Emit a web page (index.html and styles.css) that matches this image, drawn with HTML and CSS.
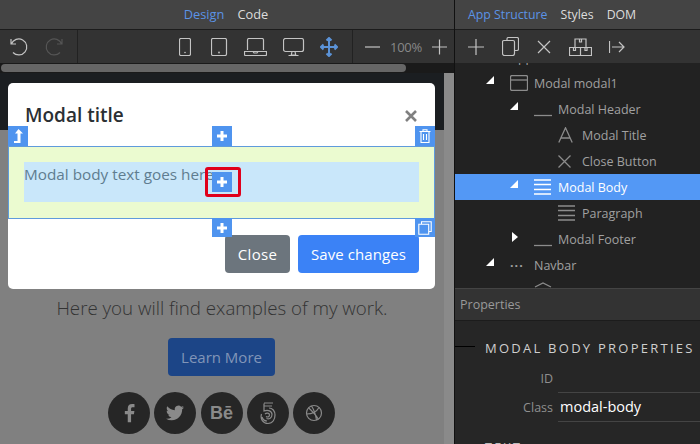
FILE: index.html
```html
<!DOCTYPE html>
<html lang="en">
<head>
    <meta charset="UTF-8" />
    <title>App Designer</title>
    <link rel="stylesheet" href="styles.css">
</head>
<body>
<div class="app">
    <div class="stage">
        <div class="tabs tabs-center">
            <span class="tab active">Design</span>
            <span class="tab">Code</span>
        </div>
        <div class="toolbar">
            <div class="tool-group history">
                <svg class="ic" width="20" height="20" viewBox="0 0 20 20"><path d="M2 2v5h5M2.300 7A8 8 0 1 1 4 15.500"/></svg>
                <svg class="ic dim" width="20" height="20" viewBox="0 0 20 20"><path d="M18 2v5h-5M17.700 7A8 8 0 1 0 16 15.500"/></svg>
            </div>
            <div class="tool-group devices">
                <svg class="ic dev-phone" width="12" height="18" viewBox="0 0 12 18"><rect x=".5" y=".5" width="11" height="17" rx="1.500"/><circle class="dot" cx="6" cy="14.500" r=".8"/></svg>
                <svg class="ic dev-tablet" width="17" height="18" viewBox="0 0 17 18"><rect x=".5" y=".5" width="15" height="17" rx="1.500"/><circle class="dot" cx="8" cy="14.500" r=".9"/></svg>
                <svg class="ic dev-laptop" width="23" height="18" viewBox="0 0 23 18"><path d="M3.500 12V2a1.500 1.500 0 0 1 1.500-1.500h13A1.500 1.500 0 0 1 19.500 2v10M.5 13.500h22v3a1 1 0 0 1-1 1h-20a1 1 0 0 1-1-1zM9 13.500l1 1.500h3l1-1.500"/></svg>
                <svg class="ic dev-desktop" width="22" height="18" viewBox="0 0 22 18"><rect x=".5" y=".5" width="20" height="13" rx="2"/><path d="M9 13.500l-.7 3.500h4.400l-.7-3.500M5.500 17.500h10"/></svg>
                <svg class="ic blue dev-free" width="18" height="20" viewBox="0 0 18 20"><path d="M9 1v18M1 10h16M6.500 3.500L9 1l2.500 2.500M6.500 16.500L9 19l2.500-2.500M3.500 7.500L1 10l2.500 2.500M14.500 7.500L17 10l-2.500 2.500"/></svg>
            </div>
            <div class="tool-group zoom">
                <svg class="ic" width="15" height="16" viewBox="0 0 15 16"><path d="M0 8h15"/></svg>
                <span class="zoom-val">100%</span>
                <svg class="ic" width="15" height="16" viewBox="0 0 15 16"><path d="M0 8h15M7.500 .5v15"/></svg>
            </div>
        </div>
        <div class="hscroll"><div class="hscroll-thumb"></div></div>

        <div class="canvas">
            <div class="page">
                <div class="page-nav"></div>
                <p class="lead">Here you will find examples of my work.</p>
                <a class="btn btn-learn">Learn More</a>
                <div class="social">
                    <span class="circle"><svg width="20" height="20" viewBox="0 0 24 24"><path class="fill" d="M14.500 23v-9.500h3.400l.6-4h-4V7.200c0-1.200.4-2 2-2h2.100V1.500C18.200 1.400 17 1.300 15.700 1.300c-3.100 0-5.200 1.800-5.200 5.300v2.900H7v4h3.500V23z"/></svg></span>
                    <span class="circle"><svg width="18" height="18" viewBox="0 0 24 24"><path class="fill" d="M23.953 4.570a10 10 0 01-2.825.775 4.958 4.958 0 002.163-2.723c-.951.555-2.005.959-3.127 1.184a4.920 4.920 0 00-8.384 4.482C7.690 8.095 4.067 6.130 1.640 3.162a4.822 4.822 0 00-.666 2.475c0 1.710.870 3.213 2.188 4.096a4.904 4.904 0 01-2.228-.616v.060a4.923 4.923 0 003.946 4.827 4.996 4.996 0 01-2.212.085 4.936 4.936 0 004.604 3.417 9.867 9.867 0 01-6.102 2.105c-.390 0-.779-.023-1.170-.067a13.995 13.995 0 007.557 2.209c9.053 0 13.998-7.496 13.998-13.985 0-.210 0-.420-.015-.630A9.935 9.935 0 0024 4.590z"/></svg></span>
                    <span class="circle behance">Bē</span>
                    <span class="circle"><svg width="16" height="23" viewBox="0 0 16 23"><path class="line" d="M4 1h9M4 1.500v2.500h8M4 4v5c4-1.500 8 0 8 3.500s-3 5-5.500 4M1.500 12c-1.500 5 1.500 9.500 6.500 9.500s7-4.500 7-8.500-2.500-7-6-7M2 15c1 3 3 4 5 4M5 12c1.500-1.500 4.500-1 4.500 1s-2 2.500-3.500 1.500"/></svg></span>
                    <span class="circle"><svg width="18" height="18" viewBox="0 0 18 18"><circle class="line" cx="9" cy="9" r="7.500"/><path class="line" d="M3.500 3.800C7 7 11 11 13.500 15.500M1.600 10C6 10 11.500 8 14 3.500M6.500 2C8.500 5 10.500 9.500 11.500 16"/></svg></span>
                </div>
            </div>
            <div class="vscroll"></div>

            <div class="modal">
                <div class="modal-header">
                    <h5 class="modal-title">Modal title</h5>
                    <svg class="modal-close" width="12" height="12" viewBox="0 0 12 12"><path d="M1 1l10 10M11 1L1 11"/></svg>
                </div>
                <div class="modal-body">
                    <p class="modal-text">Modal body text goes here.</p>
                </div>
                <div class="modal-footer">
                    <a class="btn btn-close">Close</a>
                    <a class="btn btn-save">Save changes</a>
                </div>
            </div>

            <span class="handle h-parent"><svg width="10" height="14" viewBox="0 0 10 14"><path class="fill-w" d="M5.500 0L10 4.500H7.500V14H1v-2h3.500V4.500H2z"/></svg></span>
            <span class="handle h-top"><svg class="plus" width="12" height="12" viewBox="0 0 12 12"><path d="M6 1v10M1 6h10"/></svg></span>
            <span class="handle h-trash"><svg width="12" height="14" viewBox="0 0 12 14"><path class="line-w" d="M.5 2.500h11M4 2.500V.8h4v1.700M2 2.500v11h8v-11M4.500 5v6M7.500 5v6"/></svg></span>
            <span class="handle h-inside"><svg class="plus" width="12" height="12" viewBox="0 0 12 12"><path d="M6 1v10M1 6h10"/></svg></span>
            <span class="marker"></span>
            <span class="handle h-bottom"><svg class="plus" width="12" height="12" viewBox="0 0 12 12"><path d="M6 1v10M1 6h10"/></svg></span>
            <span class="handle h-copy"><svg width="14" height="14" viewBox="0 0 14 14"><path class="line-w" d="M3.500 3V.8h9.700v9.700H11M.8 3.300h9.900v9.900H.8z"/></svg></span>
        </div>
    </div>

    <div class="side">
        <div class="tabs">
            <span class="tab active">App Structure</span>
            <span class="tab">Styles</span>
            <span class="tab">DOM</span>
        </div>
        <div class="toolbar side-tools">
            <svg class="ic" width="16" height="16" viewBox="0 0 16 16"><path d="M0 8h16M8 0v16"/></svg>
            <svg class="ic" width="17" height="19" viewBox="0 0 17 19"><path d="M5 3.500V2a1.500 1.500 0 0 1 1.500-1.500H15A1.500 1.500 0 0 1 16.500 2v10a1.500 1.500 0 0 1-1.500 1.500h-2.500M2 3.500h9A1.500 1.500 0 0 1 12.500 5v11.500A2 2 0 0 1 10.500 18.500H2.500A2 2 0 0 1 .5 16.500V5A1.500 1.500 0 0 1 2 3.500z"/></svg>
            <svg class="ic" width="14" height="14" viewBox="0 0 14 14"><path d="M1 1l12 12M13 1L1 13"/></svg>
            <svg class="ic" width="23" height="18" viewBox="0 0 23 18"><path d="M.5 9.500h11v8H.5zM11.500 9.500h11v8h-11zM6 1h11v8.500H6zM4.500 9.500v3h2v-3M16 9.500v3h2v-3M10.500 1v3h2V1"/></svg>
            <svg class="ic tool-arrow" width="16" height="14" viewBox="0 0 16 14"><path d="M.5 1v12M3 7h12M10 2l5 5-5 5"/></svg>
        </div>

        <div class="tree">
            <ul class="tree-list">
                <li class="row lv0">
                    <span class="arrow"></span>
                    <span class="row-ic"><svg class="ic" width="16" height="16" viewBox="0 0 16 16"><circle cx="8" cy="8" r="5"/></svg></span>
                    App
                </li>
                <li class="row lv1">
                    <span class="arrow open"></span>
                    <span class="row-ic"><svg class="ic" width="18" height="16" viewBox="0 0 18 16"><rect x=".5" y=".5" width="17" height="15" rx="1.500"/><path d="M.5 5h17"/></svg></span>
                    Modal modal1
                </li>
                <li class="row lv2">
                    <span class="arrow open"></span>
                    <span class="row-ic"><svg class="ic" width="18" height="16" viewBox="0 0 18 16"><path d="M0 14.500h18"/></svg></span>
                    Modal Header
                </li>
                <li class="row lv3">
                    <span class="arrow"></span>
                    <span class="row-ic"><svg class="ic" width="15" height="16" viewBox="0 0 15 16"><path d="M.8 15.500L7.500 .8l6.700 14.700M3 11h9"/></svg></span>
                    Modal Title
                </li>
                <li class="row lv3">
                    <span class="arrow"></span>
                    <span class="row-ic"><svg class="ic" width="13" height="13" viewBox="0 0 13 13"><path d="M.5 .5l12 12M12.500 .5l-12 12"/></svg></span>
                    Close Button
                </li>
                <li class="row lv2 selected">
                    <span class="arrow open"></span>
                    <span class="row-ic"><svg class="ic" width="17" height="16" viewBox="0 0 17 16"><path d="M0 1h17M0 5.500h17M0 10.500h17M0 15h17"/></svg></span>
                    Modal Body
                </li>
                <li class="row lv3">
                    <span class="arrow"></span>
                    <span class="row-ic"><svg class="ic" width="17" height="16" viewBox="0 0 17 16"><path d="M0 1h17M0 5.500h17M0 10.500h17M0 15h17"/></svg></span>
                    Paragraph
                </li>
                <li class="row lv2">
                    <span class="arrow closed"></span>
                    <span class="row-ic"><svg class="ic" width="18" height="16" viewBox="0 0 18 16"><path d="M0 14.500h18"/></svg></span>
                    Modal Footer
                </li>
                <li class="row lv1">
                    <span class="arrow open"></span>
                    <span class="row-ic dots">···</span>
                    Navbar
                </li>
                <li class="row lv2 row-cut">
                    <span class="arrow"></span>
                    <svg class="ic" width="18" height="8" viewBox="0 0 18 8"><path d="M1 5l8-4 8 4"/></svg>
                </li>
            </ul>
        </div>

        <div class="props">
            <div class="props-head">Properties</div>
            <div class="props-body">
                <h3 class="props-title">Modal Body Properties</h3>
                <div class="field">
                    <label class="field-label">ID</label>
                    <div class="field-value"></div>
                </div>
                <div class="field">
                    <label class="field-label">Class</label>
                    <div class="field-value">modal-body</div>
                </div>
                <h3 class="props-sub">Text</h3>
            </div>
        </div>
    </div>
</div>
</body>
</html>
```
FILE: styles.css
```css
* {
    box-sizing: border-box;
}
html, body {
    margin: 0;
    height: 100%;
    overflow: hidden;
}
body {
    font-family: "Open Sans", "Noto Sans", sans-serif;
    background: #222;
}
ul {
    list-style: none;
    margin: 0;
    padding: 0;
}
.app {
    display: flex;
    width: 700px;
    height: 444px;
}

/* icons */
.ic {
    fill: none;
    stroke: #c4c4c4;
    stroke-width: 1.2;
    display: block;
    flex-shrink: 0;
}
.ic.dim { stroke: #555; }
.ic.blue { stroke: #5b93d8; stroke-width: 2; }
.ic .dot { fill: #c4c4c4; stroke: none; }

/* tabs + toolbar */
.stage {
    width: 454px;
    display: flex;
    flex-direction: column;
}
.tabs {
    height: 30px;
    background: #444;
    border-bottom: 1px solid #1c1c1c;
    display: flex;
    align-items: center;
    gap: 13px;
    padding: 0 14px 1px;
    font-size: 12.300px;
}
.tabs-center {
    justify-content: center;
    font-size: 12.800px;
    padding-right: 16px;
}
.tab { color: #ddd; }
.tab.active { color: #5b93e6; }
.toolbar {
    height: 33px;
    background: #333;
    display: flex;
    align-items: center;
}
.tool-group {
    height: 100%;
    display: flex;
    align-items: center;
}
.history {
    width: 78px;
    gap: 15px;
    padding-left: 9px;
    border-right: 1px solid #222;
}
.devices {
    width: 274px;
    padding-left: 101px;
}
.dev-tablet { margin-left: 20px; }
.dev-laptop { margin-left: 16px; }
.dev-desktop { margin-left: 16px; }
.dev-free { margin-left: 15px; }
.zoom {
    flex: 1;
    gap: 10px;
    padding-left: 12px;
    border-left: 1px solid #222;
}
.zoom-val {
    color: #888;
    font-size: 13px;
    letter-spacing: -.3px;
}
.hscroll {
    height: 10px;
    background: #1a1a1a;
    padding: 1px;
}
.hscroll-thumb {
    width: 405px;
    height: 8px;
    border-radius: 5px;
    background: #666;
}

/* canvas */
.canvas {
    position: relative;
    flex: 1;
    display: flex;
    background: #808080;
    overflow: hidden;
}
.page {
    width: 444px;
    display: flex;
    flex-direction: column;
    align-items: center;
}
.vscroll {
    width: 10px;
    background: #8a8a8a;
}
.page-nav {
    width: 100%;
    height: 57px;
    flex-shrink: 0;
    background: #1b1e21;
}
.lead {
    margin: 165px 0 0;
    font-size: 18.700px;
    font-weight: 300;
    line-height: 26px;
    color: #333;
    white-space: nowrap;
}
.btn {
    display: block;
    border-radius: 4px;
    font-size: 15px;
    line-height: 38px;
    height: 38px;
    text-align: center;
}
.btn-learn {
    width: 107px;
    margin-top: 17px;
    margin-right: 1px;
    background: #1c4587;
    color: #8195b8;
}
.social {
    display: flex;
    gap: 4.250px;
    margin-top: 16px;
    margin-right: 1px;
}
.circle {
    width: 42px;
    height: 42px;
    border-radius: 50%;
    background: #262626;
    display: flex;
    align-items: center;
    justify-content: center;
}
.fill { fill: #8a8a8a; }
.line { fill: none; stroke: #8a8a8a; stroke-width: 1.200; }
.behance {
    color: #8a8a8a;
    font-family: "Liberation Sans", Arial, sans-serif;
    font-weight: 700;
    font-size: 18px;
}

/* modal sits over the page */
.modal {
    position: absolute;
    left: 8px;
    top: 10px;
    width: 427px;
    height: 206px;
    background: #fff;
    border-radius: 5px;
    display: flex;
    flex-direction: column;
}
.modal-header {
    height: 63px;
    display: flex;
    justify-content: space-between;
    align-items: flex-start;
    padding: 16px 18px 0 17px;
}
.modal-title {
    margin: 0;
    font-size: 19px;
    font-weight: 600;
    line-height: 32px;
    color: #2b2f33;
}
.modal-close {
    margin-top: 11px;
    fill: none;
    stroke: #808080;
    stroke-width: 2.600;
}
.modal-body {
    height: 73px;
    padding: 15px;
    background: #ebfbd0;
    border: 1px solid #5f9bdc;
}
.modal-text {
    margin: 0;
    height: 40px;
    background: #c9e7fa;
    font-size: 15.300px;
    line-height: 24px;
    color: #5f7d90;
    white-space: nowrap;
}
.modal-footer {
    flex: 1;
    display: flex;
    justify-content: flex-end;
    gap: 8px;
    padding: 16px;
}
.btn-close {
    width: 65px;
    background: #6c757d;
    color: #fff;
    letter-spacing: .3px;
}
.btn-save {
    width: 121px;
    background: #3b82f6;
    color: #fff;
    letter-spacing: .1px;
}

/* selection handles */
.handle {
    position: absolute;
    width: 20px;
    height: 20px;
    background: #4f94ef;
    display: flex;
    align-items: center;
    justify-content: center;
}
.plus { fill: none; stroke: #fff; stroke-width: 3; }
.fill-w { fill: #fff; }
.line-w { fill: none; stroke: #fff; stroke-width: 1.100; }
.h-parent { left: 8px; top: 53px; }
.h-top { left: 212px; top: 53px; }
.h-trash { left: 415px; top: 53px; }
.h-inside { left: 212px; top: 99px; }
.h-bottom { left: 212px; top: 145px; height: 19px; }
.h-copy { left: 415px; top: 145px; height: 19px; }
.marker {
    position: absolute;
    left: 205px;
    top: 94px;
    width: 36px;
    height: 30px;
    border: 3px solid #e0001b;
    border-radius: 3px;
}

/* right panel */
.side {
    flex: 1;
    min-width: 0;
    display: flex;
    flex-direction: column;
    border-left: 1px solid #111;
}
.side .tabs {
    padding-left: 13px;
}
.side-tools {
    gap: 18px;
    padding-left: 13px;
}
.tool-arrow { margin-left: -1px; }
.tree {
    height: 225px;
    background: #222;
    overflow: hidden;
}
.tree-list {
    margin-top: -19px;
}
.row {
    height: 26px;
    display: flex;
    align-items: center;
    font-size: 12.500px;
    color: #a0a0a0;
    white-space: nowrap;
}
.tree .ic {
    stroke: #8c8c8c;
    stroke-width: 1.300;
}
.lv0 { padding-left: 7px; }
.lv1 { padding-left: 31px; }
.lv2 { padding-left: 55px; }
.lv3 { padding-left: 79px; }
.row.selected {
    background: #5398f5;
    color: #fff;
}
.tree .row.selected .ic { stroke: #fff; }
.row-cut {
    align-items: flex-start;
    padding-top: 4px;
}
.arrow {
    width: 24px;
    flex-shrink: 0;
}
.arrow.open::before,
.arrow.closed::before {
    content: "";
    display: block;
    background: #fff;
}
.arrow.open::before {
    width: 8px;
    height: 8px;
    margin-top: -6px;
    clip-path: polygon(100% 0, 100% 100%, 0 100%);
}
.arrow.closed::before {
    width: 6px;
    height: 10px;
    margin: -4px 0 0 2px;
    clip-path: polygon(0 0, 100% 50%, 0 100%);
}
.row-ic {
    width: 24px;
    flex-shrink: 0;
    display: flex;
    align-items: center;
}
.dots {
    font-weight: 700;
    color: #a0a0a0;
    letter-spacing: 1px;
}

/* properties */
.props {
    flex: 1;
    background: #262626;
    border-top: 1px solid #444;
    overflow: hidden;
}
.props-head {
    height: 32px;
    background: #333;
    border-bottom: 1px solid #1c1c1c;
    color: #999;
    font-size: 12.500px;
    line-height: 31px;
    padding-left: 5px;
}
.props-body {
    padding: 17px 0 0 30px;
    position: relative;
}
.props-title {
    margin: 0 0 6px;
    font-size: 13px;
    font-weight: 400;
    letter-spacing: 2.250px;
    line-height: 20px;
    text-transform: uppercase;
    color: #cfcfcf;
    white-space: nowrap;
}
.props-title::before {
    content: "";
    position: absolute;
    left: 0;
    top: 25px;
    width: 20px;
    height: 1px;
    background: #000;
}
.field {
    display: flex;
    height: 29px;
    margin-left: -30px;
}
.field-label {
    width: 98px;
    text-align: right;
    font-size: 12.500px;
    line-height: 30px;
    color: #8f8f8f;
}
.field-value {
    flex: 1;
    margin-left: 5px;
    padding-left: 2px;
    border-bottom: 1px solid #444;
    color: #fff;
    font-size: 14.500px;
    line-height: 28px;
}
.props-sub {
    margin: 17px 0 0;
    font-size: 12.500px;
    font-weight: 400;
    letter-spacing: 2.300px;
    line-height: 18px;
    text-transform: uppercase;
    color: #bdbdbd;
}
```
